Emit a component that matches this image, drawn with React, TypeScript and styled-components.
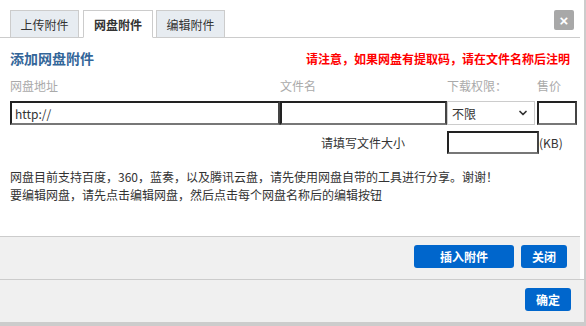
import React from 'react'
import styled, { createGlobalStyle } from 'styled-components'
import { ChevronDown } from 'lucide-react'

const GlobalStyle = createGlobalStyle`
  html, body {
    margin: 0;
    padding: 0;
    background: #fff;
  }
  body {
    font-family: 'Noto Sans CJK SC', 'Liberation Sans', sans-serif;
    font-size: 12px;
    color: #333;
  }
`

const Dialog = styled.div`
  width: 584px;
  height: 322px;
  border-right: 2px solid #ccc;
  border-bottom: 4px solid #ccc;
  background: #fff;
  display: flex;
  flex-direction: column;
`

const Frame = styled.div`
  width: 580px;
  height: 279px;
  display: flex;
  flex-direction: column;
`

const TabBar = styled.div`
  display: flex;
  align-items: flex-start;
  height: 27px;
  padding: 10px 6px 0 10px;
  border-bottom: 1px solid #ccc;
`

const Tab = styled.div<{ $active?: boolean; $gap: number }>`
  box-sizing: border-box;
  width: ${p => (p.$active ? 70 : 69)}px;
  height: ${p => (p.$active ? 28 : 27)}px;
  margin-right: ${p => p.$gap}px;
  border: 1px solid #ccc;
  border-bottom: ${p => (p.$active ? '1px solid #fff' : '0')};
  background: ${p => (p.$active ? '#fff' : '#e7ecf1')};
  font-size: 12px;
  font-weight: ${p => (p.$active ? 'bold' : 'normal')};
  color: #333;
  display: flex;
  align-items: center;
  justify-content: center;
`

const CloseBtn = styled.div`
  margin-left: auto;
  width: 20px;
  height: 20px;
  border-radius: 2px;
  background: #a8a8a8;
  color: #fff;
  font-family: 'Liberation Sans', sans-serif;
  font-weight: bold;
  font-size: 15px;
  display: flex;
  align-items: center;
  justify-content: center;
`

const Body = styled.div`
  padding: 0 10px;
  display: flex;
  flex-direction: column;
`

const TitleRow = styled.div`
  margin-top: 10px;
  height: 20px;
  display: flex;
  align-items: center;
  justify-content: space-between;
  padding-right: 0;
`

const Title = styled.div`
  font-size: 14px;
  font-weight: bold;
  color: #336699;
`

const Notice = styled.div`
  font-size: 12px;
  font-weight: bold;
  color: #f00;
`

const Grid = styled.div<{ $top: number }>`
  display: grid;
  grid-template-columns: 270px 167px 90px 40px;
  margin-top: ${p => p.$top}px;
`

const Label = styled.div`
  height: 18px;
  line-height: 18px;
  font-size: 12px;
  color: #aaa;
`

const TextInput = styled.input`
  box-sizing: border-box;
  height: 24px;
  width: 100%;
  margin: 0;
  padding: 0 3px;
  border-width: 2px;
  border-style: solid;
  border-color: #222 #444 #777 #222;
  font-family: 'Noto Sans CJK SC', 'Liberation Sans', sans-serif;
  font-size: 12px;
  color: #333;
  outline: none;
  background: #fff;
`

const SelectWrap = styled.div`
  position: relative;
  width: 88px;
`

const Select = styled.select`
  box-sizing: border-box;
  appearance: none;
  width: 88px;
  height: 24px;
  margin: 0;
  padding: 0 4px;
  border: 1px solid #ccc;
  background: #fff;
  font-family: 'Noto Sans CJK SC', sans-serif;
  font-size: 12px;
  color: #333;
  outline: none;
`

const Chevron = styled.span`
  position: absolute;
  right: 6px;
  top: 6px;
  display: flex;
  color: #333;
  pointer-events: none;
`

const SizeRow = styled.div`
  display: flex;
  align-items: center;
  margin-top: 6px;
  padding-left: 311px;
  font-size: 12px;
  color: #333;
`

const SizeLabel = styled.span`
  width: 126px;
`

const SizeInput = styled(TextInput)`
  width: 92px;
  height: 23px;
`

const Desc = styled.div`
  margin-top: 14px;
  font-size: 12px;
  line-height: 18px;
  color: #333;
`

const Footer = styled.div<{ $inner?: boolean }>`
  box-sizing: border-box;
  height: 43px;
  padding: 8px 13px 0 0;
  border-top: 1px solid #ccc;
  background: #f0f0f0;
  display: flex;
  justify-content: flex-end;
  align-items: flex-start;
  gap: 7px;
  margin-top: ${p => (p.$inner ? 'auto' : '0')};
`

const Button = styled.button<{ $w: number }>`
  width: ${p => p.$w}px;
  height: 23px;
  border: 0;
  border-radius: 3px;
  background: #0066cc;
  color: #fff;
  font-family: 'Noto Sans CJK SC', sans-serif;
  font-size: 12px;
  font-weight: bold;
  padding: 0;
`

export default function App() {
  return (
    <>
      <GlobalStyle />
      <Dialog>
        <Frame>
          <TabBar>
            <Tab $gap={4}>上传附件</Tab>
            <Tab $active $gap={3}>网盘附件</Tab>
            <Tab $gap={0}>编辑附件</Tab>
            <CloseBtn>×</CloseBtn>
          </TabBar>
          <Body>
            <TitleRow>
              <Title>添加网盘附件</Title>
              <Notice>请注意，如果网盘有提取码，请在文件名称后注明</Notice>
            </TitleRow>
            <Grid $top={9}>
              <Label>网盘地址</Label>
              <Label>文件名</Label>
              <Label>下载权限：</Label>
              <Label>售价</Label>
            </Grid>
            <Grid $top={6}>
              <TextInput defaultValue="http://" />
              <TextInput />
              <SelectWrap>
                <Select defaultValue="0">
                  <option value="0">不限</option>
                </Select>
                <Chevron>
                  <ChevronDown size={12} strokeWidth={3.5} />
                </Chevron>
              </SelectWrap>
              <TextInput />
            </Grid>
            <SizeRow>
              <SizeLabel>请填写文件大小</SizeLabel>
              <SizeInput />
              <span>(KB)</span>
            </SizeRow>
            <Desc>
              网盘目前支持百度，360，蓝奏，以及腾讯云盘，请先使用网盘自带的工具进行分享。谢谢！
              <br />
              要编辑网盘，请先点击编辑网盘，然后点击每个网盘名称后的编辑按钮
            </Desc>
          </Body>
          <Footer $inner>
            <Button $w={100}>插入附件</Button>
            <Button $w={46}>关闭</Button>
          </Footer>
        </Frame>
        <Footer>
          <Button $w={46}>确定</Button>
        </Footer>
      </Dialog>
    </>
  )
}
